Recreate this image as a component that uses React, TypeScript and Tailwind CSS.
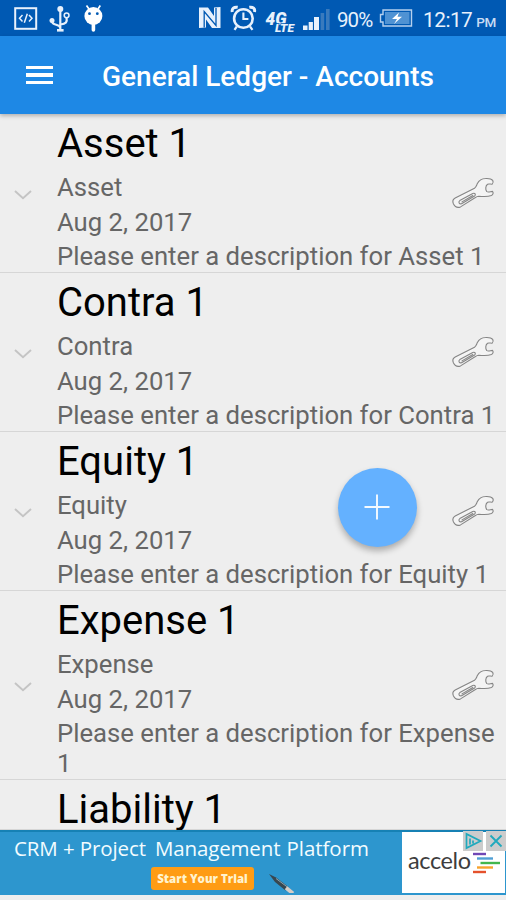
import React from "react";

type Account = { title: string; type?: string; description?: string; height: string };

const accounts: Account[] = [
  { title: "Asset 1", type: "Asset", description: "Please enter a description for Asset 1", height: "h-[159px]" },
  { title: "Contra 1", type: "Contra", description: "Please enter a description for Contra 1", height: "h-[159px]" },
  { title: "Equity 1", type: "Equity", description: "Please enter a description for Equity 1", height: "h-[159px]" },
  { title: "Expense 1", type: "Expense", description: "Please enter a description for Expense 1", height: "h-[189px]" },
  { title: "Liability 1", height: "h-[50px]" },
];

function Wrench() {
  return (
    <svg width="44" height="34" viewBox="0 0 44 34" fill="none" stroke="#858585" strokeWidth="1.1" strokeLinejoin="round" strokeLinecap="round" className="shrink-0">
      <path fill="#f4f4f4" d="M4.2 22 L23.5 12.2 C25 11.2 25.4 9.6 26.4 7.6 C28 4.4 31 2.6 34.5 2.5 C37.5 2.3 40.5 2.8 41.7 4.4 C42.4 5.6 42.2 7.2 41.2 8.2 C39.5 8.3 38 7.6 36.6 8.2 C34.4 9.6 34.2 13.6 35.8 15.6 C37.4 16.6 39.6 15.4 41.5 15.4 C42.6 16.6 42.2 18.6 40.4 19.6 C37 20.8 31.4 20.6 27.8 20.2 C26.2 20.2 25 21 24 21.7 L9.5 30.9 C6.4 32.2 3.8 30.6 2.4 27.8 C1.4 25.4 2.2 23 4.2 22 Z" />
      <path d="M8.8 24.6 L21.8 17.4 C24 16.6 25.2 18.6 23.6 20 L10.6 27.8 C8.2 28.4 7 26 8.8 24.6 Z M11 25.9 L21.8 19.5" />
    </svg>
  );
}

function AccountRow({ account }: { account: Account }) {
  return (
    <li className={`flex shrink-0 items-center border-b border-[#d6d6d6] ${account.height}`}>
      <div className="flex w-[57px] shrink-0 pl-[14px] pt-[3px]">
        {account.type && (
          <svg width="18" height="10" viewBox="0 0 18 10" fill="none" stroke="#c4c4c4" strokeWidth="1.9">
            <path d="M1 1 L9 8.2 L17 1" />
          </svg>
        )}
      </div>
      <div className="relative flex w-[449px] shrink-0 flex-col self-start pt-[6px] text-[25.7px] leading-[30px] text-[#666]">
        <h2 className="mb-[5px] text-[40px] leading-[47px] text-black">{account.title}</h2>
        {account.type && (
          <>
            <p className="mb-[4.7px]">{account.type}</p>
            <p className="mb-[4.7px]">Aug 2, 2017</p>
            <p>{account.description}</p>
            <div className="absolute inset-y-0 right-[11px] flex items-center">
              <Wrench />
            </div>
          </>
        )}
      </div>
    </li>
  );
}

function StatusBar() {
  return (
    <header className="flex h-9 shrink-0 items-center bg-[#0059b3] text-[#e8f1fc]">
      <svg width="110" height="36" viewBox="0 0 110 36" fill="none" stroke="currentColor">
        <rect x="15.2" y="8.2" width="21" height="20.6" strokeWidth="2" />
        <path d="M22.5 15 L19.5 18.3 L22.5 21.5 M29 15 L32 18.3 L29 21.5 M27.3 13.8 L24.3 22.8" strokeWidth="1.5" />
        <path d="M60.3 8 V30 M51.8 21 C52 26 60 23.5 60.3 28 M66.5 17.5 C67.5 22 66 24 60.5 24.5" strokeWidth="2.2" />
        <path d="M57 30.3 H63.6" strokeWidth="2.6" />
        <circle cx="60.3" cy="9" r="3" fill="currentColor" stroke="none" />
        <circle cx="52" cy="20.5" r="2.5" fill="currentColor" stroke="none" />
        <circle cx="66.6" cy="15.3" r="2.4" strokeWidth="1.5" />
        <circle cx="93.4" cy="16" r="9" fill="white" stroke="none" />
        <path d="M89 9 L86.5 5.5 M98 9 L100.3 5.5" stroke="white" strokeWidth="1.7" />
        <path d="M93.4 24 V30" stroke="white" strokeWidth="3.6" strokeLinecap="round" />
        <circle cx="89.5" cy="13.7" r="1.4" fill="#0059b3" stroke="none" />
        <circle cx="97.3" cy="13.7" r="1.4" fill="#0059b3" stroke="none" />
      </svg>
      <svg width="146" height="36" viewBox="190 0 146 36" fill="none" stroke="currentColor" className="ml-20">
        <path d="M199 7.5 H208 L214 16 V7.5 L220.5 7 V28 H212 L206 19.5 V27.5 L199 28 Z" fill="currentColor" stroke="none" />
        <path d="M204.2 27.5 V11.5 L216 25.5 V8" stroke="#0059b3" strokeWidth="1.3" />
        <circle cx="243.4" cy="18.5" r="9.3" strokeWidth="2.6" />
        <path d="M243.4 12.5 V19 H248.4" strokeWidth="2.1" />
        <path d="M232.3 12 C231.5 8.5 234 6.7 237.7 7.3 M254.5 12 C255.3 8.5 253 6.7 249.3 7.3" strokeWidth="3" />
        <path d="M236.8 26.5 L234.5 29.8 M250 26.5 L252.5 29.8" strokeWidth="2.2" />
        <text x="265.5" y="24.8" className="font-['Roboto'] text-[18.5px] font-black italic" textLength="21" lengthAdjust="spacingAndGlyphs" fill="currentColor" stroke="none">4G</text>
        <text x="275" y="32" className="font-['Roboto'] text-[11px] font-black italic" textLength="19" lengthAdjust="spacingAndGlyphs" fill="currentColor" stroke="#0059b3" strokeWidth="1.5" paintOrder="stroke">LTE</text>
        <g stroke="none" fill="currentColor">
          <rect x="303" y="25.5" width="4.5" height="4.5" />
          <rect x="308.7" y="22" width="4.2" height="8" />
          <rect x="314" y="17" width="5" height="13" />
          <rect x="320.6" y="13" width="3.6" height="17" fill="#397abd" />
          <rect x="326" y="9" width="3.6" height="21" fill="#397abd" />
        </g>
      </svg>
      <span className="ml-px w-[40px] whitespace-nowrap pt-[3px] text-[20.5px] leading-6 tracking-[-0.9px]">90%</span>
      <svg width="38" height="36" viewBox="376 0 38 36" fill="none" stroke="currentColor">
        <path d="M382 10 H410.5 V26 H382 V22 H379.5 V14.5 H382 Z" strokeWidth="1.4" stroke="#b5d0ee" />
        <rect x="384" y="12" width="24.5" height="12" fill="#4f92d3" stroke="none" />
        <path d="M398 12.5 L391 19 H396 L393 24 L401 16.8 H396.5 Z" fill="white" stroke="none" />
      </svg>
      <span className="ml-[8px] whitespace-nowrap pt-[3px] text-[20.8px] leading-6 tracking-[-0.5px]">12:17</span>
      <span className="ml-[4px] pt-[7px] text-[13.5px] font-medium leading-5 tracking-[-0.3px] text-[#c9dcf3]">PM</span>
    </header>
  );
}

function AdBanner() {
  return (
    <aside className="relative flex h-[65px] shrink-0 border-t-2 border-[#1681b4] bg-[#2d96ce]">
      <div className="flex w-[402px] shrink-0 flex-col">
        <p className="ml-[14px] flex h-[35px] whitespace-nowrap font-['Open_Sans'] text-[20.5px] leading-[33px] text-[#f2fcff]">
          <span className="w-[141px] tracking-[-0.1px]">CRM + Project</span>
          <span className="w-[131.5px] tracking-[-0.15px]">Management</span>
          <span className="tracking-[-0.05px]">Platform</span>
        </p>
        <div className="flex">
          <button className="ml-[151px] h-[23px] w-[103px] whitespace-nowrap rounded-[3px] bg-[#ff9c14] font-['Open_Sans'] text-[11.5px] font-extrabold leading-[23px] text-[#fff3ce]">Start Your Trial</button>
          <svg width="30" height="26" viewBox="0 0 30 26" className="ml-[14px]">
            <path d="M1 7 L8 10.5 L20.5 20 L17.5 23.5 L7 15 Z" fill="#384750" />
            <path d="M8 11.5 L20 20.5" stroke="#8fa5ae" strokeWidth="1" />
            <path d="M18 20.8 L25 26.5" stroke="#d6cdc6" strokeWidth="3.8" />
          </svg>
        </div>
      </div>
      <div className="mb-[2px] mr-px flex flex-1 items-center bg-white pl-[6px]">
        <span className="w-[63px] pb-[3px] font-['Lato'] text-[23.5px] leading-none tracking-[-0.4px] text-[#3d3d3d]">accelo</span>
        <svg width="28" height="23" viewBox="0 0 28 23" className="ml-[2px] mt-px shrink-0" fill="none" strokeWidth="2.4">
          <path d="M0 2 H13" stroke="#7048b5" />
          <path d="M4 6.5 H20" stroke="#509fd5" />
          <path d="M7.5 11 H27" stroke="#43b64c" />
          <path d="M4 15.5 H20" stroke="#f6a32d" />
          <path d="M0 20 H13" stroke="#e5512c" />
        </svg>
      </div>
      <div className="absolute right-0 -top-px flex h-5 gap-[3px]">
        <svg width="20" height="20" viewBox="0 0 20 20" fill="none" stroke="#20a9bd" strokeWidth="1.7" className="bg-[#ccc]">
          <path d="M3.5 3 V17 L17.5 10 Z M7 7.5 V13.5 M10 9.5 V12.5" />
        </svg>
        <svg width="20" height="20" viewBox="0 0 20 20" fill="none" stroke="#20a9bd" strokeWidth="1.8" className="bg-[#ccc]">
          <path d="M4.5 4.5 L15.5 15.5 M15.5 4.5 L4.5 15.5" />
        </svg>
      </div>
    </aside>
  );
}

export default function App() {
  return (
    <div className="relative flex h-[900px] w-[506px] flex-col overflow-hidden bg-[#eee] font-['Roboto',sans-serif]">
      <StatusBar />
      <nav className="z-10 flex h-[78px] shrink-0 items-center bg-[#1e88e5] shadow-[0_2px_4px_rgba(0,0,0,0.25)]">
        <button aria-label="Menu" className="ml-[26px] flex w-[27px] flex-col gap-[4px]">
          <span className="h-[3.5px] bg-white" />
          <span className="h-[3.5px] bg-white" />
          <span className="h-[3.5px] bg-white" />
        </button>
        <h1 className="ml-[49px] whitespace-nowrap pt-[3px] text-[28px] font-medium leading-8 text-white">General Ledger - Accounts</h1>
      </nav>
      <ul className="flex h-[716px] shrink-0 flex-col overflow-hidden">
        {accounts.map((account) => (
          <AccountRow key={account.title} account={account} />
        ))}
      </ul>
      <AdBanner />
      <button aria-label="Add account" className="absolute left-[338px] top-[468px] flex h-[79px] w-[79px] items-center justify-center rounded-full bg-[#64b1ff] pb-px pr-px shadow-[0_4px_6px_rgba(0,0,0,0.28)]">
        <svg width="26" height="26" viewBox="0 0 26 26" stroke="#f4faff" strokeWidth="1.9">
          <path d="M13 0.5 V25.5 M0.5 13 H25.5" />
        </svg>
      </button>
    </div>
  );
}
